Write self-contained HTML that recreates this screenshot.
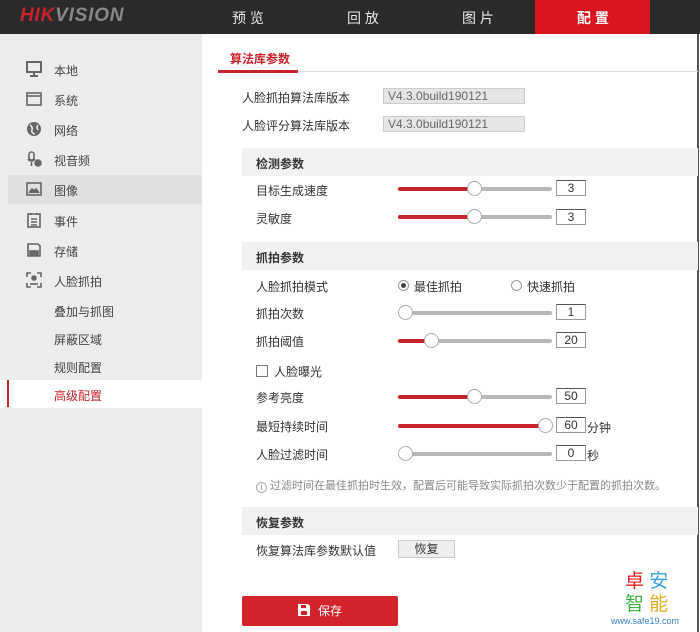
<!DOCTYPE html>
<html><head><meta charset="utf-8"><style>
*{margin:0;padding:0;box-sizing:border-box}
body{width:700px;height:632px;overflow:hidden;background:#fff;font-family:"Liberation Sans","Noto Sans CJK SC",sans-serif;font-size:12px;color:#333;position:relative}
.a{position:absolute;white-space:nowrap}
.top{position:absolute;left:0;top:0;width:700px;height:34px;background:#2a2a2a}
.nav{position:absolute;top:8px;color:#e8e8e8;font-size:14px}
.side{position:absolute;left:0;top:34px;width:202px;height:598px;background:#ececec}
.si{position:absolute;left:54px;font-size:12px;color:#444}
.ic{position:absolute;left:26px;width:16px;height:16px}
.hdr{position:absolute;left:242px;width:456px;height:28px;background:#f1f1f1}
.hdr span{position:absolute;left:14px;top:7px;font-weight:bold;font-size:12px;color:#333}
.lbl{position:absolute;left:256px;font-size:12px;color:#333}
.trk{position:absolute;left:398px;width:154px;height:4px;background:#b8b8b8;border-radius:2px}
.fill{position:absolute;left:0;top:0;height:4px;background:#c8222c;border-radius:2px}
.th{position:absolute;top:-6px;width:15px;height:15px;border-radius:50%;background:#fff;border:1px solid #aaa}
.box{position:absolute;left:556px;width:30px;height:16px;border:1px solid #999;border-top-color:#555;text-align:center;font-size:12px;line-height:14px;background:#fff}
</style></head><body>
<div class="top"></div>
<div class="a" style="left:20px;top:5px;font-size:19px;font-style:italic;font-weight:bold;letter-spacing:0.8px"><span style="color:#c8222c">HIK</span><span style="color:#888">VISION</span></div>
<div class="nav" style="left:232px">预 览</div>
<div class="nav" style="left:347px">回 放</div>
<div class="nav" style="left:462px">图 片</div>
<div class="a" style="left:535px;top:0;width:115px;height:34px;background:#d9161f"></div>
<div class="nav" style="left:577px;color:#fff;font-weight:bold">配 置</div>
<div class="a" style="left:697px;top:34px;width:2px;height:598px;background:#555"></div>

<div class="side"></div>
<div class="a" style="left:8px;top:175px;width:194px;height:29px;background:#e0e0e0"></div>
<div class="a" style="left:0;top:380px;width:202px;height:28px;background:#fff"></div>
<div class="a" style="left:7px;top:380px;width:2px;height:27px;background:#c8222c"></div>

<svg class="ic" style="top:61px" viewBox="0 0 16 16" fill="none" stroke="#666" stroke-width="2"><rect x="1" y="1" width="14" height="10"/><path d="M8 11v3M4 15h8"/></svg>
<svg class="ic" style="top:91px" viewBox="0 0 16 16" fill="none" stroke="#666" stroke-width="1.6"><rect x="1" y="2" width="14" height="12"/><path d="M1 5h14"/></svg>
<svg class="ic" style="top:121px" viewBox="0 0 16 16"><circle cx="8" cy="8" r="7" fill="#666"/><path d="M4 4q3 2 2 5t3 4M12 4q-2 2 0 5" stroke="#ececec" stroke-width="1.5" fill="none"/></svg>
<svg class="ic" style="top:151px" viewBox="0 0 16 16" fill="none" stroke="#666" stroke-width="1.6"><rect x="3" y="1" width="5" height="8" rx="2.5"/><path d="M2 8q3 4 7 0M5.5 11v4"/><circle cx="12" cy="12" r="3" fill="#666"/></svg>
<svg class="ic" style="top:181px" viewBox="0 0 16 16" fill="none" stroke="#666" stroke-width="1.6"><rect x="1" y="2" width="14" height="12"/><path d="M3 12l3-4 2 2 2-2 3 4" fill="#666"/></svg>
<svg class="ic" style="top:212px" viewBox="0 0 16 16" fill="none" stroke="#666" stroke-width="1.6"><rect x="2" y="2" width="12" height="13"/><path d="M5 1v2M11 1v2M5 7h6M5 10h6M5 13h6"/></svg>
<svg class="ic" style="top:242px" viewBox="0 0 16 16" fill="none" stroke="#666" stroke-width="1.6"><path d="M2 2h10l2 2v10H2z"/><rect x="4" y="9" width="8" height="4" fill="#666"/></svg>
<svg class="ic" style="top:272px" viewBox="0 0 16 16" fill="none" stroke="#666" stroke-width="1.6"><path d="M1 5V1h4M11 1h4v4M15 11v4h-4M5 15H1v-4"/><circle cx="8" cy="6" r="2" fill="#666"/><path d="M4 12h8"/></svg>

<div class="si" style="top:62px">本地</div>
<div class="si" style="top:92px">系统</div>
<div class="si" style="top:122px">网络</div>
<div class="si" style="top:152px">视音频</div>
<div class="si" style="top:182px">图像</div>
<div class="si" style="top:213px">事件</div>
<div class="si" style="top:243px">存储</div>
<div class="si" style="top:273px">人脸抓拍</div>
<div class="si" style="top:303px">叠加与抓图</div>
<div class="si" style="top:331px">屏蔽区域</div>
<div class="si" style="top:359px">规则配置</div>
<div class="si" style="top:387px;color:#c8222c">高级配置</div>

<div class="a" style="left:230px;top:50px;color:#c8222c;font-weight:bold;font-size:12px">算法库参数</div>
<div class="a" style="left:218px;top:71px;width:480px;height:1px;background:#ddd"></div>
<div class="a" style="left:218px;top:70px;width:80px;height:3px;background:#c8222c"></div>

<div class="a" style="left:242px;top:89px">人脸抓拍算法库版本</div>
<div class="a" style="left:383px;top:88px;width:142px;height:16px;background:#e6e6e6;border:1px solid #ccc;color:#666;padding-left:4px;line-height:14px">V4.3.0build190121</div>
<div class="a" style="left:242px;top:117px">人脸评分算法库版本</div>
<div class="a" style="left:383px;top:116px;width:142px;height:16px;background:#e6e6e6;border:1px solid #ccc;color:#666;padding-left:4px;line-height:14px">V4.3.0build190121</div>

<div class="hdr" style="top:148px"><span>检测参数</span></div>
<div class="lbl" style="top:182px">目标生成速度</div>
<div class="trk" style="top:187px"><div class="fill" style="width:76px"></div><div class="th" style="left:69px"></div></div>
<div class="box" style="top:180px">3</div>
<div class="lbl" style="top:210px">灵敏度</div>
<div class="trk" style="top:215px"><div class="fill" style="width:76px"></div><div class="th" style="left:69px"></div></div>
<div class="box" style="top:209px">3</div>

<div class="hdr" style="top:242px"><span>抓拍参数</span></div>
<div class="lbl" style="top:278px">人脸抓拍模式</div>
<div class="a" style="left:398px;top:280px;width:11px;height:11px;border:1px solid #999;border-radius:50%"><div style="position:absolute;left:2px;top:2px;width:5px;height:5px;border-radius:50%;background:#444"></div></div>
<div class="a" style="left:414px;top:278px">最佳抓拍</div>
<div class="a" style="left:511px;top:280px;width:11px;height:11px;border:1px solid #999;border-radius:50%"></div>
<div class="a" style="left:527px;top:278px">快速抓拍</div>
<div class="lbl" style="top:305px">抓拍次数</div>
<div class="trk" style="top:311px"><div class="th" style="left:0"></div></div>
<div class="box" style="top:304px">1</div>
<div class="lbl" style="top:333px">抓拍阈值</div>
<div class="trk" style="top:339px"><div class="fill" style="width:33px"></div><div class="th" style="left:26px"></div></div>
<div class="box" style="top:332px">20</div>
<div class="a" style="left:256px;top:365px;width:12px;height:12px;border:1px solid #777;background:#fff"></div>
<div class="a" style="left:274px;top:363px">人脸曝光</div>
<div class="lbl" style="top:389px">参考亮度</div>
<div class="trk" style="top:395px"><div class="fill" style="width:76px"></div><div class="th" style="left:69px"></div></div>
<div class="box" style="top:388px">50</div>
<div class="lbl" style="top:418px">最短持续时间</div>
<div class="trk" style="top:424px"><div class="fill" style="width:148px"></div><div class="th" style="left:140px"></div></div>
<div class="box" style="top:417px">60</div>
<div class="a" style="left:587px;top:419px">分钟</div>
<div class="lbl" style="top:446px">人脸过滤时间</div>
<div class="trk" style="top:452px"><div class="th" style="left:0"></div></div>
<div class="box" style="top:445px">0</div>
<div class="a" style="left:587px;top:447px">秒</div>
<div class="a" style="left:256px;top:477px;font-size:11px;color:#888"><span style="display:inline-block;width:11px;height:11px;border:1px solid #aaa;border-radius:50%;vertical-align:-1px;font-size:8px;text-align:center;line-height:9px">i</span> 过滤时间在最佳抓拍时生效，配置后可能导致实际抓拍次数少于配置的抓拍次数。</div>

<div class="hdr" style="top:507px"><span>恢复参数</span></div>
<div class="lbl" style="top:542px">恢复算法库参数默认值</div>
<div class="a" style="left:398px;top:540px;width:57px;height:18px;background:#eee;border:1px solid #ccc;text-align:center;line-height:16px">恢复</div>

<div class="a" style="left:242px;top:596px;width:156px;height:30px;background:#d2222b;border-radius:2px;color:#fff;text-align:center;line-height:30px"><svg width="12" height="12" viewBox="0 0 12 12" style="vertical-align:-1px;margin-right:8px"><path d="M0 0h10l2 2v10H0z" fill="#fff"/><rect x="3" y="7" width="6" height="4" fill="#d2222b"/><rect x="3" y="1" width="5" height="3" fill="#d2222b"/></svg>保存</div>

<div class="a" style="left:625px;top:571px;font-size:19px;line-height:22px"><span style="color:#e02020">卓</span> <span style="color:#3aa0e0">安</span></div>
<div class="a" style="left:625px;top:594px;font-size:19px;line-height:22px"><span style="color:#40b040">智</span> <span style="color:#e0b020">能</span></div>
<div class="a" style="left:611px;top:616px;font-size:9px;color:#3a80c0">www.safe19.com</div>
</body></html>
